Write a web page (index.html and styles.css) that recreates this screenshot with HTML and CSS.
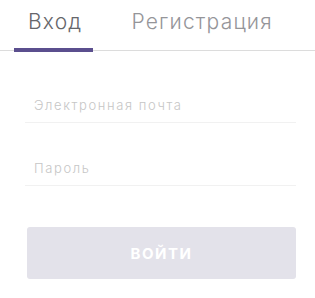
FILE: index.html
```html
<!DOCTYPE html>
<html lang="ru">
<head>
<meta charset="UTF-8" />
<meta name="viewport" content="width=device-width, initial-scale=1" />
<title>Вход</title>
<link rel="stylesheet" href="styles.css">
</head>
<body>

<div class="auth">
  <div class="tabs">
    <div class="tab active">Вход</div>
    <div class="tab">Регистрация</div>
  </div>
  <form class="form">
    <input class="field" type="email" placeholder="Электронная почта" />
    <input class="field" type="password" placeholder="Пароль" />
    <button class="submit" type="button" disabled>Войти</button>
  </form>
</div>

</body>
</html>
```

FILE: styles.css
```css
body {
  margin: 0;
  background: #fff;
  font-family: Inter, "Noto Sans", sans-serif;
}
.auth {
  width: 315px;
}
.tabs {
  display: flex;
  padding-left: 14px;
  border-bottom: 1px solid #dcdcdc;
  height: 50px;
}
.tab {
  padding: 9px 11px 0 14px;
  font-size: 21px;
  font-weight: 300;
  letter-spacing: 1.2px;
  color: #959599;
  height: 41px;
}
.tab + .tab {
  margin-left: 24px;
}
.tab.active {
  color: #66666b;
  border-bottom: 4px solid #5b4f8e;
  height: 39px;
  margin-bottom: -3px;
}
.form {
  display: flex;
  flex-direction: column;
  padding: 37px 19px 0 25px;
}
.field {
  border: none;
  border-bottom: 1px solid #f1f1f1;
  height: 34px;
  padding: 0 0 0 9px;
  margin-bottom: 28px;
  font-family: inherit;
  font-size: 13px;
  font-weight: 300;
  letter-spacing: 1.6px;
  outline: none;
}
.field::placeholder {
  color: #c6c6c6;
}
.submit {
  margin: 13px 0 0 2px;
  height: 52px;
  border: none;
  border-radius: 3px;
  background: #e3e2ea;
  color: #fff;
  font-family: inherit;
  font-size: 15px;
  font-weight: 700;
  letter-spacing: 1.5px;
  text-transform: uppercase;
}
```
